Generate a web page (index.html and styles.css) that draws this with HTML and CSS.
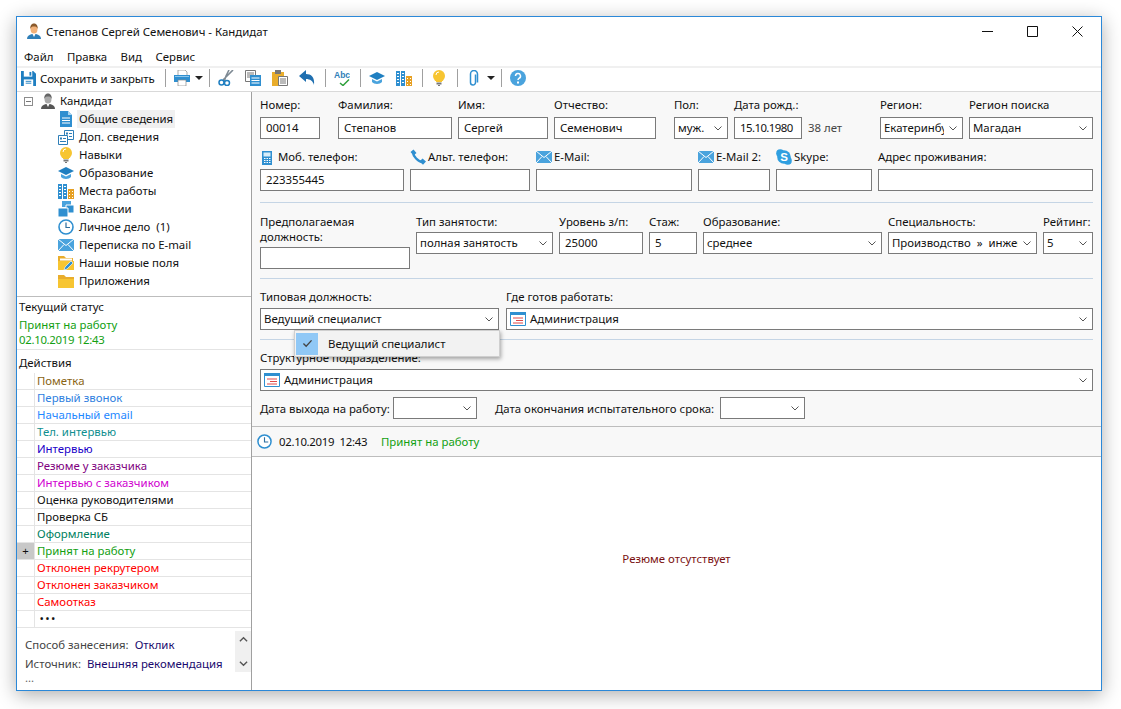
FILE: index.html
```html
<!DOCTYPE html>
<html lang="ru">
<head>
<meta charset="utf-8">
<title>Кандидат</title>
<link rel="stylesheet" href="styles.css">
</head>
<body>
<svg class="defs" width="0" height="0">
  <defs>
    <symbol id="i-person" viewBox="0 0 16 16"><path d="M1 16c0-3 2-4 5-5h4c3 1 5 2 5 5z" fill="#2f7fb8"/><path d="M6.500 11L8 14l1.500-3z" fill="#fff"/><ellipse cx="8" cy="6" rx="3.500" ry="4.500" fill="#f2b27a"/><path d="M4.300 6C4 2 6 .5 8 .5s4 1.500 3.700 5.500C11 4 10 3.500 8 3.500S5 4 4.300 6z" fill="#8a5a2b"/></symbol>
    <symbol id="i-gperson" viewBox="0 0 16 16"><path d="M1 16c0-3 2-4 5-5h4c3 1 5 2 5 5z" fill="#555"/><path d="M6.500 11L8 14l1.500-3z" fill="#fff"/><ellipse cx="8" cy="6" rx="3.500" ry="4.500" fill="#aaa"/><path d="M4.300 6C4 2 6 .5 8 .5s4 1.500 3.700 5.500C11 4 10 3.500 8 3.500S5 4 4.300 6z" fill="#666"/></symbol>
    <symbol id="i-doc" viewBox="0 0 16 16"><path d="M2 0h8l4 4v12H2z" fill="#2f8fd0"/><path d="M10 0l4 4h-4z" fill="#a8d4f0"/><path d="M4 7h8M4 9.500h8M4 12h8" stroke="#fff"/></symbol>
    <symbol id="i-forms" viewBox="0 0 16 16"><path d="M6.500 1.500h9v9h-9z" fill="#fff" stroke="#2f7fb8"/><path d="M.5 6.500h9v9h-9z" fill="#fff" stroke="#2f7fb8"/><path d="M8 3.500h2v2H8zM11 4h3v1h-3zM11 7h3v1h-3zM2 8.500h2v2H2zM5 9h3v1H5zM2 12h6v1H2z" fill="#2f7fb8"/></symbol>
    <symbol id="i-bulb" viewBox="0 0 16 16"><circle cx="8" cy="6" r="6" fill="#f7c531"/><path d="M5 10h6v2H5z" fill="#f7c531"/><path d="M5.500 12.500h5v2h-5z" fill="#777"/><path d="M7 15h2v1H7z" fill="#777"/><path d="M5 5a3 3 0 0 1 3-3" stroke="#fff" fill="none"/></symbol>
    <symbol id="i-grad" viewBox="0 0 16 16"><path d="M0 6l8-4 8 4-8 4z" fill="#1f7fc1"/><path d="M3 9v3c2 2.500 8 2.500 10 0V9l-5 2.500z" fill="#4aa3dd"/></symbol>
    <symbol id="i-build" viewBox="0 0 16 16"><path d="M0 1h4v15H0zM5 1h4v15H5z" fill="#2f8fd0"/><path d="M10 6h6v10h-6z" fill="#e6a023"/><path d="M1 3h2v1H1zM1 6h2v1H1zM1 9h2v1H1zM1 12h2v1H1zM6 3h2v1H6zM6 6h2v1H6zM6 9h2v1H6zM6 12h2v1H6zM11 8h1v1h-1zM14 8h1v1h-1zM11 11h1v1h-1zM14 11h1v1h-1zM11 14h1v1h-1zM14 14h1v1h-1z" fill="#fff"/></symbol>
    <symbol id="i-vac" viewBox="0 0 16 16"><path d="M4 0h9v6H4z" fill="#4aa3dd"/><path d="M8 4h8v8H8z" fill="#2f8fd0" stroke="#fff"/><path d="M0 7h10v9H0z" fill="#2f8fd0" stroke="#fff"/></symbol>
    <symbol id="i-clock" viewBox="0 0 16 16"><circle cx="8" cy="8" r="7" fill="#fff" stroke="#2f8fd0" stroke-width="1.600"/><path d="M8 3.500V8.500H12" fill="none" stroke="#2f6f9f" stroke-width="1.200"/></symbol>
    <symbol id="i-mail" viewBox="0 0 16 12"><path d="M0 0h16v12H0z" fill="#4aa3dd"/><path d="M0 0l8 6.500L16 0M0 12l6-6.500M16 12l-6-6.500" fill="none" stroke="#fff"/></symbol>
    <symbol id="i-fold" viewBox="0 0 16 16"><path d="M0 2h6l2 2h8v11H0z" fill="#e9ad2c"/><path d="M0 6h16v9H0z" fill="#f7c531"/></symbol>
    <symbol id="i-foldp" viewBox="0 0 16 16"><path d="M0 1h6l2 2h7v12H0z" fill="#e9ad2c"/><path d="M2 3.500h12v2H2z" fill="#fff"/><path d="M0 6h16v9H0z" fill="#f7c531"/><path d="M6 15l1-3 6-6 2 2-6 6z" fill="#2f8fd0" stroke="#fff" stroke-width=".6"/></symbol>
    <symbol id="i-save" viewBox="0 0 16 16"><path d="M0 0h13l3 3v13H0z" fill="#1f7fc1"/><path d="M3 0h9v6H3z" fill="#fff"/><path d="M9 1h2v4H9z" fill="#1f7fc1"/><path d="M3 9h10v7H3z" fill="#fff"/><path d="M5 11h6M5 13h6" stroke="#1f7fc1"/></symbol>
    <symbol id="i-print" viewBox="0 0 16 16"><path d="M4 0h7l2 2v4H4z" fill="#fff" stroke="#888" stroke-width=".7"/><path d="M0 5h16v7H0z" fill="#2f8fd0"/><path d="M4 10h8v6H4z" fill="#fff" stroke="#888" stroke-width=".7"/><path d="M1 6h14v1H1z" fill="#8cc6ec"/></symbol>
    <symbol id="i-cut" viewBox="0 0 16 16"><path d="M15 0L5 10M11 0L8 6l-2 6" fill="none" stroke="#7e8a94" stroke-width="1.600"/><circle cx="3.500" cy="12.500" r="2.500" fill="none" stroke="#1f7fc1" stroke-width="1.500"/><circle cx="9" cy="13" r="2.500" fill="none" stroke="#1f7fc1" stroke-width="1.500"/></symbol>
    <symbol id="i-copy" viewBox="0 0 16 16"><path d="M.5.500h10v11H.500z" fill="#fff" stroke="#777"/><path d="M2 3h7M2 5h7M2 7h7" stroke="#777"/><path d="M5 5h11v11H5z" fill="#2f8fd0"/><path d="M6.500 8h8M6.500 10.500h8M6.500 13h8" stroke="#fff"/></symbol>
    <symbol id="i-paste" viewBox="0 0 16 16"><path d="M0 2h12v14H0z" fill="#e9ad2c"/><path d="M3 0h6v4H3z" fill="#777"/><path d="M6.500 6.500h9v9h-9z" fill="#fff" stroke="#777"/><path d="M8 9h6M8 11h6M8 13h6" stroke="#777"/></symbol>
    <symbol id="i-undo" viewBox="0 0 16 16"><path d="M0 6l7-6v4c5 0 9 3 8 11-1-4-4-6-8-6v3z" fill="#1f6fb0"/></symbol>
    <symbol id="i-spell" viewBox="0 0 16 16"><path d="M6 13l3 2.500 6-6" fill="none" stroke="#2fa03c" stroke-width="1.500"/><text x="0" y="8" font-size="8.500" font-family="Liberation Sans" font-weight="700" fill="#2f7fb8">Abc</text></symbol>
    <symbol id="i-clip" viewBox="0 0 16 16"><path d="M10.500 4v8a2.500 2.500 0 0 1-5 0V3.500a3.500 3.500 0 0 1 7 0V12" transform="translate(-1 .5)" fill="none" stroke="#2f8fd0" stroke-width="1.500"/></symbol>
    <symbol id="i-help" viewBox="0 0 16 16"><circle cx="8" cy="8" r="8" fill="#4aa3dd"/><path d="M5.500 6a2.500 2.500 0 1 1 3.500 2.300c-.7.400-1 .8-1 1.700" fill="none" stroke="#fff" stroke-width="1.500"/><path d="M7 11.500h2v2H7z" fill="#fff"/></symbol>
    <symbol id="i-mob" viewBox="0 0 12 16"><path d="M1 2h10v14H1z" fill="#2f8fd0"/><path d="M2.500 3.500h7v4h-7z" fill="#d8eefa"/><path d="M3 9h1.500v1H3zM5.500 9H7v1H5.500zM8 9h1.500v1H8zM3 11h1.500v1H3zM5.500 11H7v1H5.500zM8 11h1.500v1H8zM3 13h1.500v1H3zM5.500 13H7v1H5.500zM8 13h1.500v1H8z" fill="#fff"/></symbol>
    <symbol id="i-phone" viewBox="0 0 16 16"><path d="M3 3c0 4 5 10 10 10" fill="none" stroke="#2f8fd0" stroke-width="2.400"/><path d="M.5 3L3.500.5l3 3.500L3.500 6.500zM9.500 12.500l3-3 3.500 3-3 3.200z" fill="#2f8fd0"/></symbol>
    <symbol id="i-skype" viewBox="0 0 16 16"><circle cx="8" cy="8" r="6.800" fill="#2f9fe0"/><circle cx="4.200" cy="4.200" r="4" fill="#2f9fe0"/><circle cx="11.800" cy="11.800" r="4" fill="#2f9fe0"/><text x="8" y="12" font-size="11.500" font-family="Liberation Sans" font-weight="700" fill="#fff" text-anchor="middle">S</text></symbol>
    <symbol id="i-dept" viewBox="0 0 16 16"><path d="M.5 1.500h15v13H.500z" fill="#fff" stroke="#2f8fd0"/><path d="M0 1h16v3H0z" fill="#2f8fd0"/><path d="M3 7h10M6 9.500h7M3 12h10" stroke="#e04848"/></symbol>
    <symbol id="i-chev" viewBox="0 0 8 5"><path d="M.5.500L4 4 7.500.500" fill="none" stroke="#555"/></symbol>
    <symbol id="i-tri" viewBox="0 0 8 4"><path d="M0 0h8L4 4z" fill="#222"/></symbol>
  </defs>
</svg>

<main class="window">
  <header class="titlebar">
    <svg class="ico16"><use href="#i-person"/></svg>
    <span class="title">Степанов Сергей Семенович - Кандидат</span>
    <div class="winctl">
      <svg class="winbtn" viewBox="0 0 11 11"><path d="M0 5.500h11" stroke="#111"/></svg>
      <svg class="winbtn" viewBox="0 0 11 11"><path d="M.5.500h10v10H.500z" fill="none" stroke="#111"/></svg>
      <svg class="winbtn" viewBox="0 0 11 11"><path d="M.5.500l10 10M10.500.500l-10 10" stroke="#111"/></svg>
    </div>
  </header>
  <nav class="menubar"><span>Файл</span><span>Правка</span><span>Вид</span><span>Сервис</span></nav>
  <div class="toolbar">
    <svg class="ico15"><use href="#i-save"/></svg><span class="savelabel">Сохранить и закрыть</span>
    <i class="tsep"></i>
    <svg class="ico16"><use href="#i-print"/></svg><svg class="tri"><use href="#i-tri"/></svg>
    <i class="tsep"></i>
    <svg class="ico16 tb"><use href="#i-cut"/></svg>
    <svg class="ico16 tb"><use href="#i-copy"/></svg>
    <svg class="ico16 tb"><use href="#i-paste"/></svg>
    <svg class="ico16 tb"><use href="#i-undo"/></svg>
    <i class="tsep"></i>
    <svg class="ico16 tb"><use href="#i-spell"/></svg>
    <i class="tsep"></i>
    <svg class="ico16 tb"><use href="#i-grad"/></svg>
    <svg class="ico16 tb"><use href="#i-build"/></svg>
    <i class="tsep"></i>
    <svg class="ico16 tb"><use href="#i-bulb"/></svg>
    <i class="tsep"></i>
    <svg class="ico16"><use href="#i-clip"/></svg><svg class="tri"><use href="#i-tri"/></svg>
    <i class="tsep"></i>
    <svg class="ico16"><use href="#i-help"/></svg>
  </div>
  <div class="body">
    <aside class="side">
      <ul class="tree">
        <li class="root"><span class="minus"></span><svg class="ico16"><use href="#i-gperson"/></svg><span>Кандидат</span></li>
        <li><svg class="ico16"><use href="#i-doc"/></svg><span class="sel">Общие сведения</span></li>
        <li><svg class="ico16"><use href="#i-forms"/></svg><span>Доп. сведения</span></li>
        <li><svg class="ico16"><use href="#i-bulb"/></svg><span>Навыки</span></li>
        <li><svg class="ico16"><use href="#i-grad"/></svg><span>Образование</span></li>
        <li><svg class="ico16"><use href="#i-build"/></svg><span>Места работы</span></li>
        <li><svg class="ico16"><use href="#i-vac"/></svg><span>Вакансии</span></li>
        <li><svg class="ico16"><use href="#i-clock"/></svg><span>Личное дело&nbsp; (1)</span></li>
        <li><svg class="ico16"><use href="#i-mail"/></svg><span>Переписка по E-mail</span></li>
        <li><svg class="ico16"><use href="#i-foldp"/></svg><span>Наши новые поля</span></li>
        <li><svg class="ico16"><use href="#i-fold"/></svg><span>Приложения</span></li>
      </ul>
      <section class="status">
        <div class="status-h">Текущий статус</div>
        <div class="green">Принят на работу</div>
        <div class="green date">02.10.2019 12:43</div>
      </section>
      <div class="actions-h">Действия</div>
      <ul class="actions">
        <li><b></b><span class="c-brown">Пометка</span></li>
        <li><b></b><span class="c-blue">Первый звонок</span></li>
        <li><b></b><span class="c-blue2">Начальный email</span></li>
        <li><b></b><span class="c-teal">Тел. интервью</span></li>
        <li><b></b><span class="c-indigo">Интервью</span></li>
        <li><b></b><span class="c-purple">Резюме у заказчика</span></li>
        <li><b></b><span class="c-magenta">Интервью с заказчиком</span></li>
        <li><b></b><span>Оценка руководителями</span></li>
        <li><b></b><span>Проверка СБ</span></li>
        <li><b></b><span class="c-dgreen">Оформление</span></li>
        <li><b class="plus">+</b><span class="c-green">Принят на работу</span></li>
        <li><b></b><span class="c-red">Отклонен рекрутером</span></li>
        <li><b></b><span class="c-red">Отклонен заказчиком</span></li>
        <li><b></b><span class="c-red">Самоотказ</span></li>
        <li><b></b><span class="dots">• • •</span></li>
      </ul>
      <section class="source">
        <div class="src-text">
          <div class="src-row"><span class="muted">Способ занесения:</span><span class="navy">Отклик</span></div>
          <div class="src-row"><span class="muted">Источник:</span><span class="navy">Внешняя рекомендация</span></div>
          <div class="more">...</div>
        </div>
        <div class="scroller">
          <svg class="arrow" viewBox="0 0 10 6"><path d="M1 5.500L5 1.500l4 4" fill="none" stroke="#555" stroke-width="1.500"/></svg>
          <svg class="arrow" viewBox="0 0 10 6"><path d="M1 .500L5 4.500l4-4" fill="none" stroke="#555" stroke-width="1.500"/></svg>
        </div>
      </section>
    </aside>
    <div class="content">
      <form class="form">
        <div class="row r1">
          <label class="f w60 gap-r"><span>Номер:</span><span class="inp">00014</span></label>
          <label class="f w114"><span>Фамилия:</span><span class="inp">Степанов</span></label>
          <label class="f w90"><span>Имя:</span><span class="inp">Сергей</span></label>
          <label class="f w102 gap-r"><span>Отчество:</span><span class="inp">Семенович</span></label>
          <label class="f w54"><span>Пол:</span><span class="inp sel-i">муж.<svg class="chev"><use href="#i-chev"/></svg></span></label>
          <label class="f w68"><span>Дата рожд.:</span><span class="inp tight">15.10.1980</span></label>
          <span class="age">38 лет</span>
          <label class="f w83"><span>Регион:</span><span class="inp sel-i"><span class="clip">Екатеринбург</span><svg class="chev"><use href="#i-chev"/></svg></span></label>
          <label class="f w124"><span>Регион поиска</span><span class="inp sel-i">Магадан<svg class="chev"><use href="#i-chev"/></svg></span></label>
        </div>
        <div class="row r2">
          <label class="f w144"><span class="il"><svg class="ico-l mob"><use href="#i-mob"/></svg>Моб. телефон:</span><span class="inp">223355445</span></label>
          <label class="f w120"><span class="il"><svg class="ico-l"><use href="#i-phone"/></svg>Альт. телефон:</span><span class="inp"></span></label>
          <label class="f w156"><span class="il"><svg class="ico-l"><use href="#i-mail"/></svg>E-Mail:</span><span class="inp"></span></label>
          <label class="f w72"><span class="il"><svg class="ico-l"><use href="#i-mail"/></svg>E-Mail 2:</span><span class="inp"></span></label>
          <label class="f w96"><span class="il"><svg class="ico-l"><use href="#i-skype"/></svg>Skype:</span><span class="inp"></span></label>
          <label class="f grow"><span>Адрес проживания:</span><span class="inp"></span></label>
        </div>
        <hr class="sep s1">
        <div class="row r3">
          <label class="f w150"><span class="two">Предполагаемая должность:</span><span class="inp"></span></label>
          <div class="group">
            <label class="f w137"><span>Тип занятости:</span><span class="inp sel-i">полная занятость<svg class="chev"><use href="#i-chev"/></svg></span></label>
            <label class="f w84"><span>Уровень з/п:</span><span class="inp">25000</span></label>
            <label class="f w48"><span>Стаж:</span><span class="inp">5</span></label>
            <label class="f w179"><span>Образование:</span><span class="inp sel-i">среднее<svg class="chev"><use href="#i-chev"/></svg></span></label>
            <label class="f w149"><span>Специальность:</span><span class="inp sel-i"><span class="clip">Производство &nbsp;»&nbsp; инженер</span><svg class="chev"><use href="#i-chev"/></svg></span></label>
            <label class="f grow"><span>Рейтинг:</span><span class="inp sel-i">5<svg class="chev"><use href="#i-chev"/></svg></span></label>
          </div>
        </div>
        <hr class="sep s2">
        <div class="row r4">
          <div class="f w239 anchor"><span>Типовая должность:</span><span class="inp sel-i">Ведущий специалист<svg class="chev"><use href="#i-chev"/></svg></span>
            <div class="popup"><span class="check"><svg viewBox="0 0 12 10"><path d="M1.500 5l3 3 6-6.500" fill="none" stroke="#444" stroke-width="1.500"/></svg></span><span>Ведущий специалист</span></div>
          </div>
          <label class="f grow"><span>Где готов работать:</span><span class="inp sel-i ic"><svg class="ico16"><use href="#i-dept"/></svg><span>Администрация</span><svg class="chev"><use href="#i-chev"/></svg></span></label>
        </div>
        <hr class="sep s3">
        <label class="f r5"><span>Структурное подразделение:</span><span class="inp sel-i ic"><svg class="ico16"><use href="#i-dept"/></svg><span>Администрация</span><svg class="chev"><use href="#i-chev"/></svg></span></label>
        <div class="row r6">
          <span class="lbl1">Дата выхода на работу:</span><span class="inp sel-i w84"><svg class="chev"><use href="#i-chev"/></svg></span>
          <span class="lbl2">Дата окончания испытательного срока:</span><span class="inp sel-i w85"><svg class="chev"><use href="#i-chev"/></svg></span>
        </div>
      </form>
      <div class="statusbar">
        <svg class="ico15"><use href="#i-clock"/></svg>
        <span class="when">02.10.2019&nbsp; 12:43</span>
        <span class="green">Принят на работу</span>
      </div>
      <div class="resume">Резюме отсутствует</div>
    </div>
  </div>
</main>
</body>
</html>
```

FILE: styles.css
```css
* { box-sizing: border-box; }
html, body { margin: 0; padding: 0; background: #fff; }
body {
  width: 1121px; height: 709px; overflow: hidden;
  padding: 16px 19px 18px 16px;
  font-family: "Noto Sans", "Open Sans", sans-serif;
  font-size: 11.4px; color: #111;
}
ul { list-style: none; margin: 0; padding: 0; }
.defs { position: absolute; }
svg { flex: none; display: block; }
.ico16 { width: 16px; height: 16px; }
.ico15 { width: 15px; height: 15px; }

.window {
  width: 1086px; height: 675px;
  border: 1px solid #2b88d8;
  background: #fff;
  box-shadow: 0 4px 18px rgba(0,0,0,.32);
  display: flex; flex-direction: column;
}
.titlebar { height: 30px; display: flex; align-items: center; padding: 0 0 2px 9px; flex: none; }
.title { margin-left: 4px; }
.winctl { margin-left: auto; display: flex; gap: 34px; padding-right: 18px; }
.winbtn { width: 11px; height: 11px; }
.menubar { height: 19px; display: flex; gap: 13.5px; padding-left: 7px; align-items: center; flex: none; }
.toolbar {
  height: 26px; flex: none; display: flex; align-items: center;
  padding: 0 0 3px 4px;
  border-top: 2px solid #f0f0f0; border-bottom: 1px solid #d9d9d9;
}
.savelabel { margin-left: 4px; letter-spacing: -.1px; }
.tsep { width: 1px; height: 18px; background: #a0a0a0; margin: 0 8px 0 10px; }
.tri { width: 8px; height: 4px; margin: 0 -4px 0 5px; }
.tb + .tb { margin-left: 11px; }

.body { flex: 1; display: flex; min-height: 0; }
.side { width: 235px; flex: none; border-right: 1px solid #a0a0a0; display: flex; flex-direction: column; }
.tree { border-bottom: 1px solid #bdbdbd; height: 205px; flex: none; }
.tree li { height: 18px; line-height: 18px; display: flex; align-items: center; padding-left: 41px; }
.tree li > svg { margin-right: 5px; }
.tree li.root { padding-left: 7px; }
.tree li.root > svg { margin: 0 4px 0 7px; }
.minus { width: 9px; height: 9px; border: 1px solid #8c8c8c; background: linear-gradient(#777,#777) center/5px 1px no-repeat; }
.sel { background: #f0f0f0; padding: 0 2px; margin-left: -2px; }
.status { padding: 2px 2px 0; height: 53px; flex: none; border-bottom: 1px solid #e4e4e4; }
.status > div { line-height: 16px; }
.status .date { line-height: 13px; letter-spacing: -.3px; }
.status .status-h { margin-bottom: 2px; }
.green { color: #12a012; }
.actions-h { padding-left: 2px; line-height: 16px; height: 16px; flex: none; margin-top: 5px; }
.actions { border-bottom: 1px solid #e4e4e4; margin-top: 1px; flex: none; }
.actions li { height: 17px; display: flex; border-top: 1px solid #e4e4e4; line-height: 16px; }
.actions li:first-child { border-top-color: transparent; }
.actions b { width: 18px; flex: none; font-weight: 400; border-right: 1px solid #e4e4e4; text-align: center; margin-right: 2px; }
.actions b.plus { background: #c8c8c8; }
.dots { padding-left: 3px; font-size: 9px; font-weight: 700; }
.c-brown { color: #8a6414; } .c-blue { color: #2f7fe0; } .c-blue2 { color: #1e88ff; }
.c-teal { color: #0f8f8f; } .c-indigo { color: #2000c8; } .c-purple { color: #800080; }
.c-magenta { color: #d000d0; } .c-dgreen { color: #008060; } .c-green { color: #12a012; } .c-red { color: #ff0000; }
.source { flex: 1; display: flex; padding: 3px 0 0 8px; }
.src-text { flex: 1; padding-top: 4px; }
.src-row { display: flex; gap: 6px; line-height: 19px; }
.muted { color: #444; } .navy { color: #1a0a6e; }
.more { color: #666; line-height: 10px; }
.scroller { width: 16px; height: 41px; background: #f0f0f0; display: flex; flex-direction: column; justify-content: space-between; align-items: center; padding: 5px 0; flex: none; }
.arrow { width: 9px; height: 6px; }

.content { flex: 1; display: flex; flex-direction: column; min-width: 0; }
.form { background: #f8f8f8; padding: 5px 8px 0; height: 334px; flex: none; }
.row { display: flex; gap: 6px; }
.f { display: flex; flex-direction: column; flex: none; }
.f > span:first-child { line-height: 16px; height: 20px; }
.inp {
  height: 22px; border: 1px solid #7a7a7a; background: #fff; display: flex; align-items: center;
  padding: 0 5px; line-height: 20px; white-space: nowrap; overflow: hidden; flex: none;
}
.tight { letter-spacing: -.55px; }
.sel-i { padding: 0 3px; }
.chev { width: 8px; height: 5px; margin: 0 2px 0 auto; }
.clip { overflow: hidden; flex: 1; min-width: 0; margin-right: 5px; }
.ic svg.ico16 { margin-right: 4px; }
.w48{width:48px}.w54{width:54px}.w60{width:60px}.w68{width:68px}.w72{width:72px}.w83{width:83px}.w84{width:84px}.w85{width:85px}.w90{width:90px}.w96{width:96px}.w102{width:102px}.w114{width:114px}.w120{width:120px}.w124{width:124px}.w137{width:137px}.w144{width:144px}.w149{width:149px}.w150{width:150px}.w156{width:156px}.w179{width:179px}.w239{width:239px}
.f.grow { flex: 1; min-width: 0; }
.gap-r { margin-right: 12px; }
.age { width: 66px; flex: none; align-self: flex-end; line-height: 22px; color: #444; }
.r2 { margin-top: 10px; }
.f > span.il { display: flex; align-items: center; gap: 2px; height: 16px; margin-bottom: 4px; }
.ico-l { width: 16px; height: 16px; }
.mob { width: 14px; margin-right: 2px; }
.sep { border: 0; border-top: 1px solid #c5d5e5; margin: 0; height: 1px; }
.s1 { margin-top: 11px; }
.r3 { margin-top: 11px; }
.f > span.two { height: 33px; line-height: 15px; white-space: normal; }
.group { display: flex; gap: 6px; flex: 1; }
.group .f > span:first-child { height: 18px; line-height: 15px; }
.s2 { margin-top: 9px; }
.r4 { margin-top: 10px; gap: 7px; }
.r4 .f > span:first-child, .r5 > span:first-child { height: 19px; }
.anchor { position: relative; }
.popup {
  position: absolute; left: 34px; top: 41px; width: 206px; height: 27px;
  background: #f2f2f2; border: 1px solid #cfcfcf; box-shadow: 1px 2px 4px rgba(0,0,0,.35);
  display: flex; align-items: center; z-index: 2;
}
.check { width: 22px; height: 22px; background: #90c8f6; margin: 0 10px 0 1px; display: flex; align-items: center; justify-content: center; flex: none; }
.check svg { width: 11px; height: 9px; }
.s3 { margin-top: 9px; }
.r5 { margin-top: 10px; }
.r6 { margin-top: 6px; align-items: center; gap: 0; }
.lbl1 { width: 133px; flex: none; }
.lbl2 { width: 225px; flex: none; margin-left: 18px; }
.statusbar {
  height: 31px; flex: none; background: #f8f8f8;
  border-top: 1px solid #bdbdbd; border-bottom: 1px solid #bdbdbd;
  display: flex; align-items: center; padding-left: 5px;
}
.when { margin-left: 7px; width: 87px; margin-right: 15px; letter-spacing: -.3px; white-space: nowrap; }
.resume { flex: 1; display: flex; align-items: center; justify-content: center; color: #7a1010; padding-bottom: 31px; }
```
